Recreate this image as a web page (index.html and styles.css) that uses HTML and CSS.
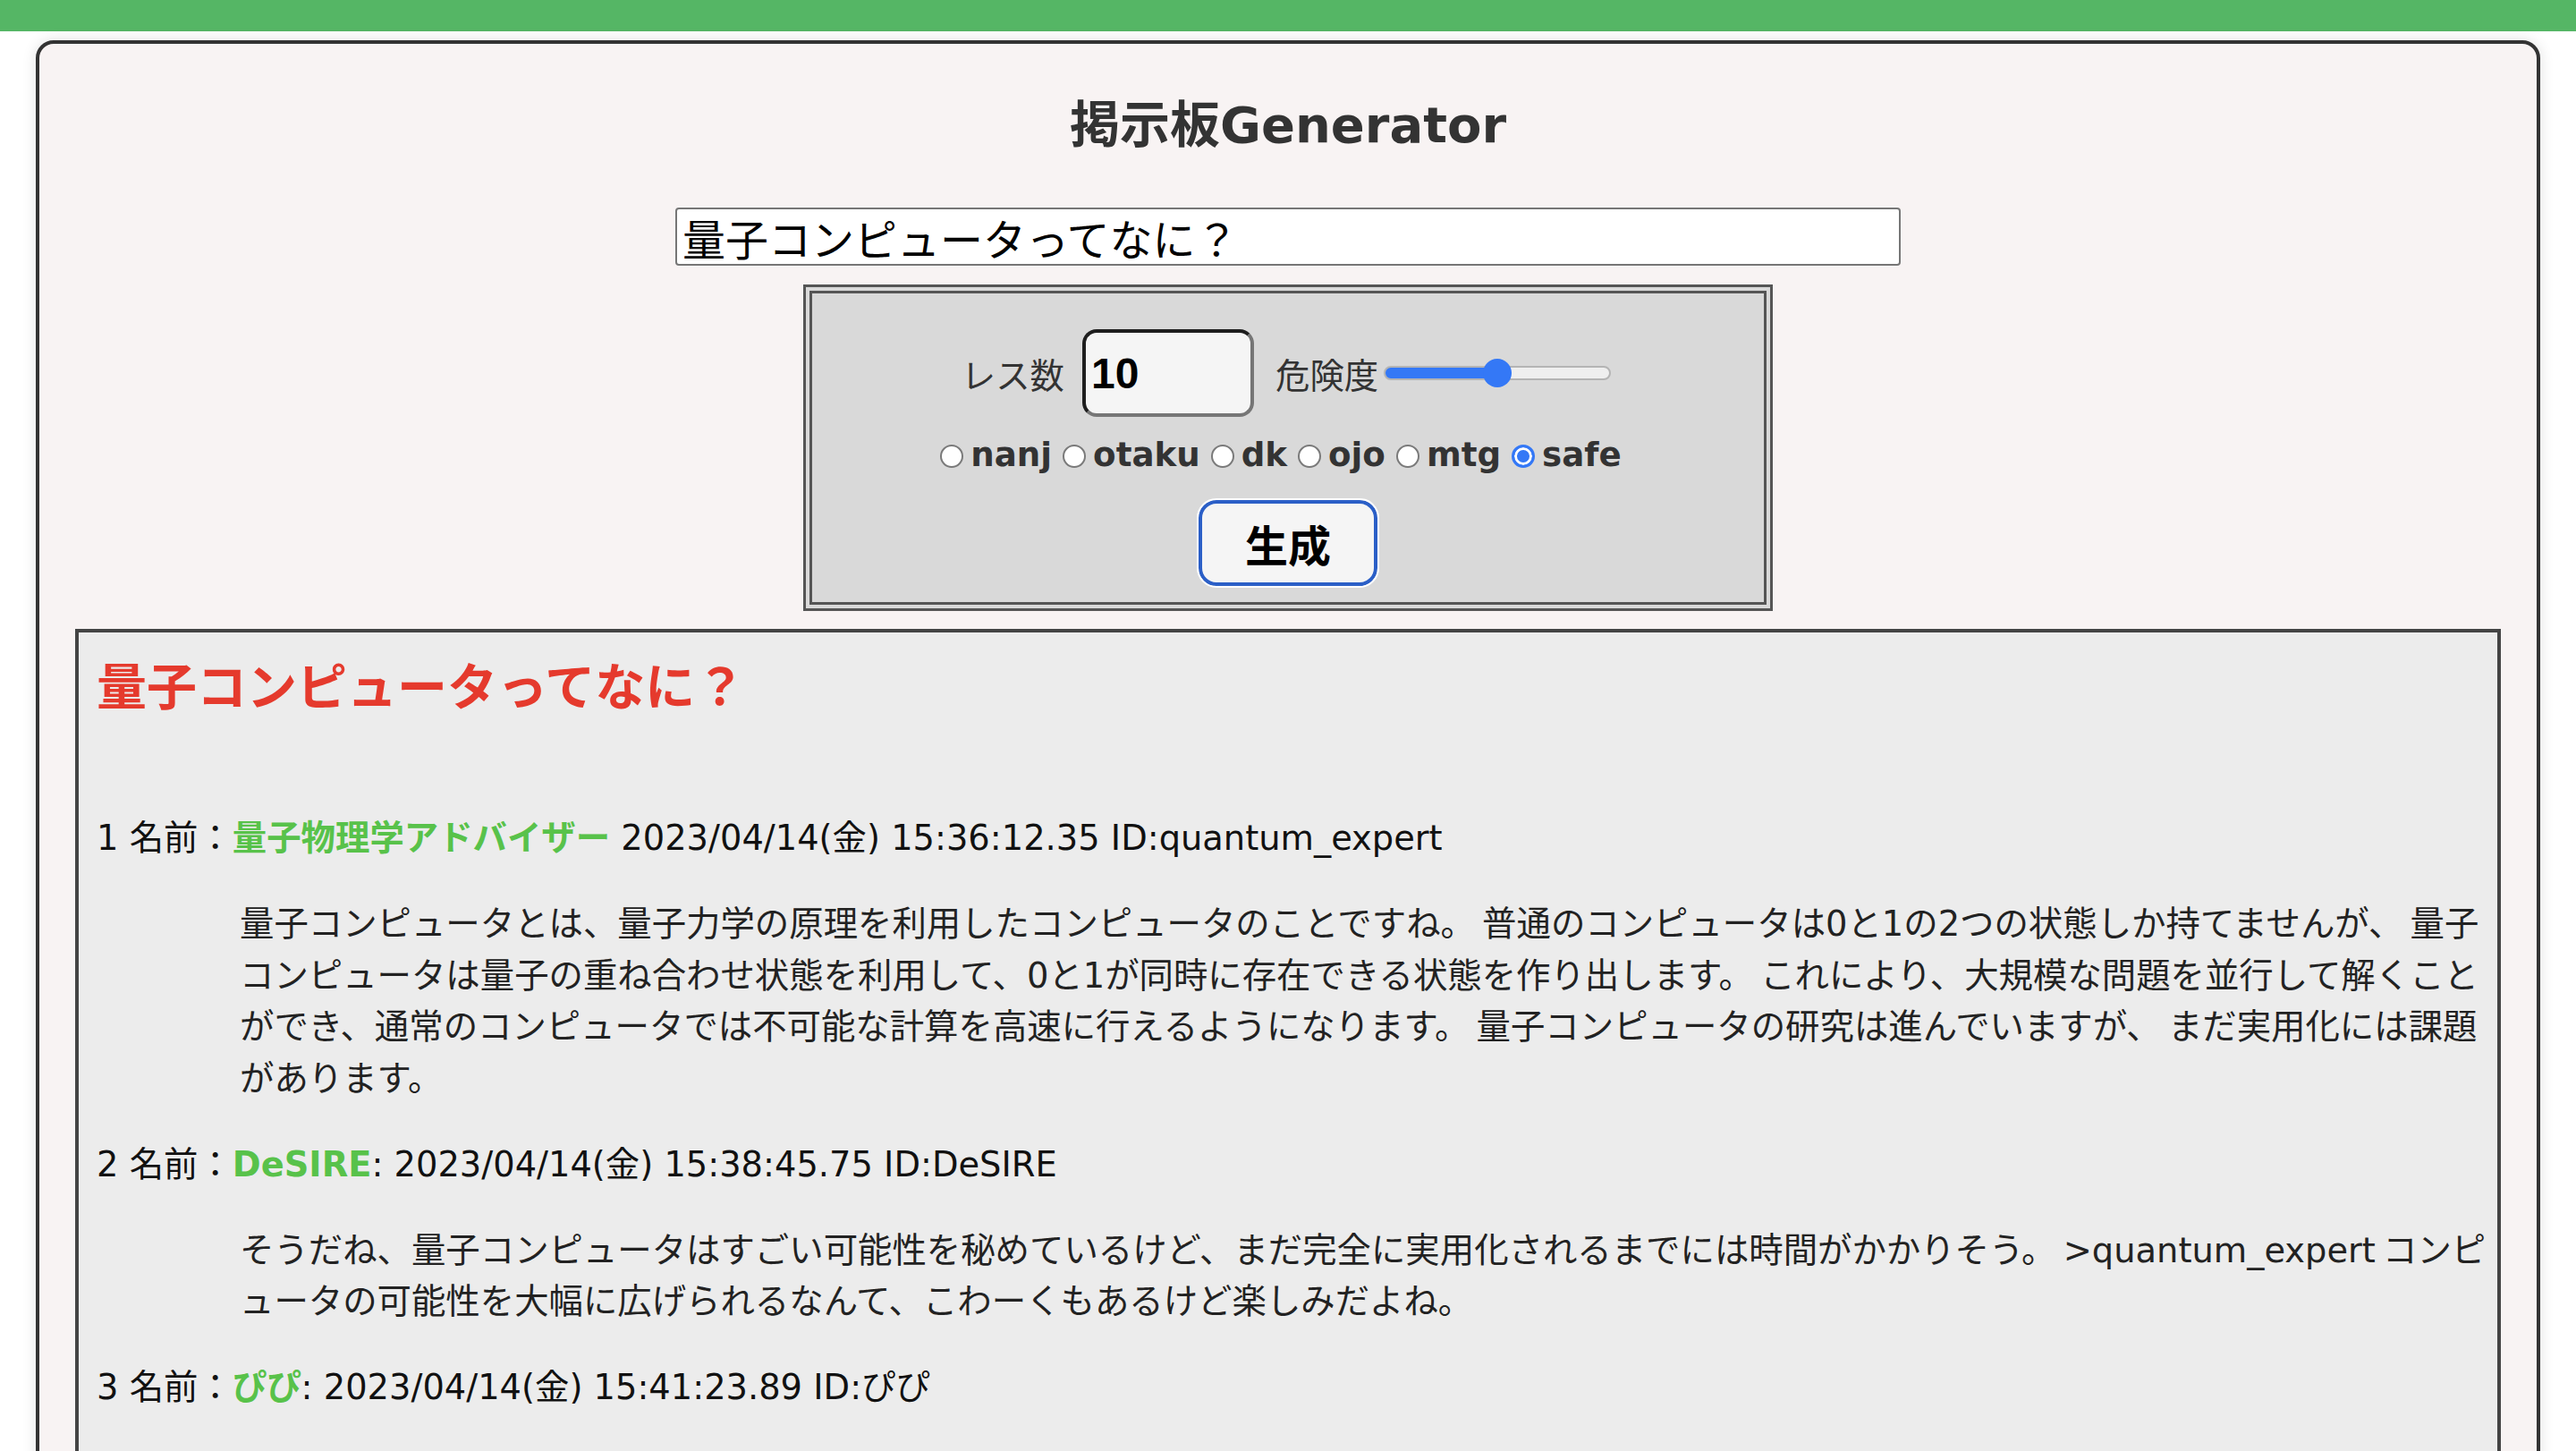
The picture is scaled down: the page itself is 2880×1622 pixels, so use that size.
FILE: index.html
```html
<!DOCTYPE html>
<html lang="ja">

<head>
    <meta charset="UTF-8">
    <title>掲示板Generator</title>
    <meta name="viewport" content="width=device-width, initial-scale=1.0" />
    <link rel="stylesheet" href="styles.css">
</head>

<body>
    <header class="topbar"></header>

    <main class="container">
        <h1 class="title">掲示板Generator</h1>
        <input type="text" id="theme" class="theme-input" value="量子コンピュータってなに？">

        <div class="settings">
            <div class="settings-row">
                <label class="field-label" for="resCount">レス数</label>
                <input type="number" id="resCount" class="res-count" value="10" min="1" max="100">
                <label class="field-label" for="danger">危険度</label>
                <input type="range" id="danger" class="danger" min="0" max="100" value="50">
            </div>
            <div class="board-types">
                <label><input type="radio" name="board" value="nanj">nanj</label>
                <label><input type="radio" name="board" value="otaku">otaku</label>
                <label><input type="radio" name="board" value="dk">dk</label>
                <label><input type="radio" name="board" value="ojo">ojo</label>
                <label><input type="radio" name="board" value="mtg">mtg</label>
                <label><input type="radio" name="board" value="safe" checked>safe</label>
            </div>
            <button id="generateBtn" class="generate-btn">生成</button>
        </div>

        <section class="thread">
            <h2 class="thread-title">量子コンピュータってなに？</h2>
            <dl class="posts">
                <dt>1 名前：<b class="name">量子物理学アドバイザー</b> 2023/04/14(金) 15:36:12.35 ID:quantum_expert</dt>
                <dd>量子コンピュータとは、量子力学の原理を利用したコンピュータのことですね。 普通のコンピュータは0と1の2つの状態しか持てませんが、 量子コンピュータは量子の重ね合わせ状態を利用して、0と1が同時に存在できる状態を作り出します。 これにより、大規模な問題を並行して解くことができ、通常のコンピュータでは不可能な計算を高速に行えるようになります。 量子コンピュータの研究は進んでいますが、 まだ実用化には課題があります。</dd>

                <dt>2 名前：<b class="name">DeSIRE</b>: 2023/04/14(金) 15:38:45.75 ID:DeSIRE</dt>
                <dd>そうだね、量子コンピュータはすごい可能性を秘めているけど、まだ完全に実用化されるまでには時間がかかりそう。 &gt;quantum_expert コンピュータの可能性を大幅に広げられるなんて、こわーくもあるけど楽しみだよね。</dd>

                <dt>3 名前：<b class="name">ぴぴ</b>: 2023/04/14(金) 15:41:23.89 ID:ぴぴ</dt>
                <dd>量子コンピュータって名前だけでもうカッコいいよね。 早くみんなが使えるようになってほしいなー。</dd>
            </dl>
        </section>
    </main>
</body>

</html>
```

FILE: styles.css
```css
html {
    zoom: 2;
}

body {
    margin: 0;
    background: #fff;
    font-family: "DejaVu Sans", "Noto Sans CJK JP", sans-serif;
    color: #222;
}

.topbar {
    height: 17.5px;
    background: #55b665;
}

.container {
    margin: 5px 20px 0;
    padding-bottom: 20px;
    background: #f8f3f3;
    border: 2px solid #333;
    border-radius: 10px;
    box-shadow: 0 0 8px rgba(0, 0, 0, 0.12);
}

.title {
    margin: 24.5px 0 25px;
    font-size: 28px;
    line-height: 42px;
    text-align: center;
    color: #333;
}

.theme-input {
    display: block;
    box-sizing: border-box;
    width: 685px;
    height: 32.5px;
    margin: 0 auto;
    padding: 0 3px;
    border: 1px solid #767676;
    border-radius: 2px;
    background: #fff;
    font: 24px "Liberation Sans", "Noto Sans CJK JP", sans-serif;
    color: #000;
}

/* settings panel */
.settings {
    box-sizing: border-box;
    width: 542px;
    margin: 10.5px auto 0;
    padding: 20px 0 9px;
    border: 5px double #555;
    background: #d9d9d9;
    display: flex;
    flex-direction: column;
    align-items: center;
}

.settings-row {
    display: flex;
    align-items: center;
    height: 49px;
}

.field-label {
    font-size: 19.2px;
    color: #333;
}

.res-count {
    box-sizing: border-box;
    width: 96px;
    height: 49px;
    margin: 0 12px 0 10px;
    padding: 0 3px;
    border: 2px solid;
    border-color: #1e1e1e #767676 #767676 #1e1e1e;
    border-radius: 8px;
    background: #f5f5f5;
    font: bold 24px "Liberation Sans", sans-serif;
    color: #000;
    -moz-appearance: textfield;
}

.res-count::-webkit-inner-spin-button,
.res-count::-webkit-outer-spin-button {
    -webkit-appearance: none;
    margin: 0;
}

.danger {
    -webkit-appearance: none;
    appearance: none;
    width: 127px;
    height: 16px;
    margin: 0 2px 0 3px;
    background: transparent;
}

.danger::-webkit-slider-runnable-track {
    box-sizing: border-box;
    height: 8px;
    border: 1px solid #b4b4b4;
    border-radius: 4px;
    background: linear-gradient(to right, #3478f6 50%, #efefef 50%);
}

.danger::-webkit-slider-thumb {
    -webkit-appearance: none;
    width: 16px;
    height: 16px;
    margin-top: -5px;
    border-radius: 50%;
    background: #3478f6;
}

.board-types {
    display: flex;
    margin-top: 7px;
    padding-right: 14px;
    font-size: 18.6px;
    line-height: 28.8px;
    font-weight: bold;
    color: #333;
}

.board-types label {
    display: flex;
    align-items: center;
}

.board-types input {
    -webkit-appearance: none;
    appearance: none;
    box-sizing: border-box;
    width: 13px;
    height: 13px;
    margin: 1px 4px 0 6px;
    border: 1px solid #7a7a7a;
    border-radius: 50%;
    background: #fff;
}

.board-types input:checked {
    border: 1.5px solid #3478f6;
    background: #3478f6;
    box-shadow: inset 0 0 0 1.5px #fff;
}

.generate-btn {
    box-sizing: border-box;
    width: 100px;
    height: 48px;
    margin-top: 10.7px;
    padding: 0;
    border: 2px solid #2b5fc7;
    outline: 1px solid #fff;
    border-radius: 10px;
    background: #f5f5f5;
    font: bold 24px "Noto Sans CJK JP", sans-serif;
    color: #000;
    cursor: pointer;
}

/* generated thread */
.thread {
    margin: 10px 20px 0;
    padding: 10px 2px 10px 10px;
    border: 2px solid #444;
    background: #ececec;
}

.thread-title {
    margin: 0 0 48.5px;
    font-size: 28px;
    line-height: 42px;
    color: #e53a2d;
}

.posts {
    margin: 0;
    font-size: 19.2px;
    line-height: 28.8px;
}

.posts dt {
    color: #111;
}

.posts dd {
    margin: 19.2px 0 19.2px 80px;
    color: #222;
    word-spacing: -2px;
}

.name {
    color: #58c24a;
}
```
